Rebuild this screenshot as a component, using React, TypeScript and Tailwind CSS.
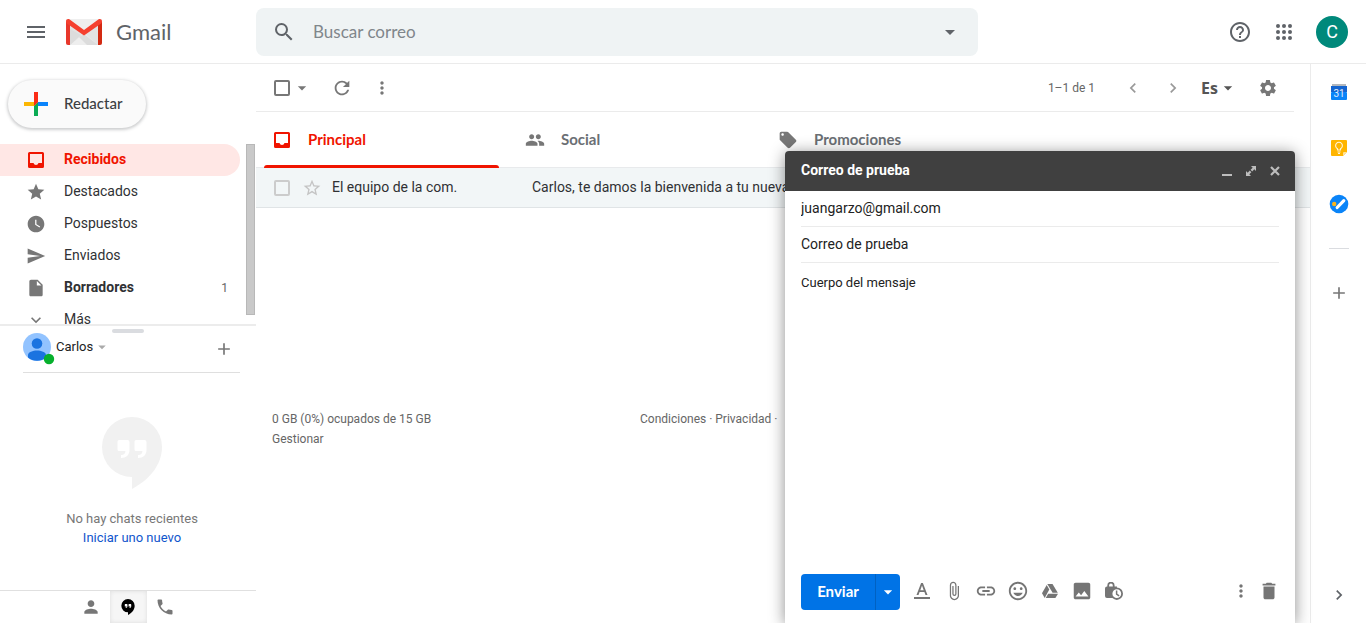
import React from 'react';
import {
  MdAdd,
  MdArrowDropDown,
  MdAttachFile,
  MdChevronLeft,
  MdChevronRight,
  MdDelete,
  MdExpandMore,
  MdHelpOutline,
  MdImage,
  MdInsertDriveFile,
  MdInsertLink,
  MdLocalOffer,
  MdMenu,
  MdMood,
  MdMoreVert,
  MdPeople,
  MdPerson,
  MdPhone,
  MdRefresh,
  MdSearch,
  MdSend,
  MdSettings,
  MdStar,
  MdStarBorder,
  MdWatchLater,
} from 'react-icons/md';

const brand = "font-['Lato','Open_Sans',sans-serif]";

type IconButtonProps = {
  label: string;
  className?: string;
  children: React.ReactNode;
};

function IconButton({ label, className = 'size-8', children }: IconButtonProps) {
  return (
    <button
      type="button"
      aria-label={label}
      className={`flex shrink-0 items-center justify-center ${className}`}
    >
      {children}
    </button>
  );
}

function InboxIcon() {
  return (
    <svg viewBox="0 0 16 16" className="size-4" fill="currentColor" aria-hidden="true">
      <path
        fillRule="evenodd"
        d="M1.5 0h13A1.5 1.5 0 0 1 16 1.500v13a1.500 1.500 0 0 1-1.500 1.500h-13A1.500 1.500 0 0 1 0 14.500v-13A1.500 1.500 0 0 1 1.500 0ZM2 2v9h3.500a2.600 2.600 0 0 0 5 0H14V2Z"
      />
    </svg>
  );
}

function GmailLogo() {
  return (
    <svg viewBox="0 0 36 26" className="h-[26px] w-9" aria-hidden="true">
      <rect width="36" height="26" rx="2" fill="#e3e3e3" />
      <path d="M4 26 18 14l14 12Z" fill="#eeeeee" />
      <path d="M4 10v16l11-10ZM13 18l5-3 14 11H21Z" fill="#dcdcdc" />
      <path d="M2 0h32L18 12Z" fill="#efefef" />
      <path d="M0 2.500V24a2 2 0 0 0 2 2h2V5Z" fill="#e8372b" />
      <path d="M36 2.500V24a2 2 0 0 1-2 2h-2V5Z" fill="#d32a12" />
      <path
        d="M0 2.500C0 .3 2.200-.5 3.700.6L18 11 32.300.6C33.800-.5 36 .3 36 2.500c0 1-.4 1.700-1.200 2.300L18 16.500 1.200 4.800C.4 4.200 0 3.500 0 2.500Z"
        fill="#f5402f"
      />
    </svg>
  );
}

function ComposePlus() {
  return (
    <svg viewBox="0 0 24 24" className="size-6" aria-hidden="true">
      <path d="M10 0h4v10l-4 4Z" fill="#fb2c16" />
      <path d="M0 10h10v4H0Z" fill="#fbb603" />
      <path d="M10 14l4-4v14h-4Z" fill="#0bab54" />
      <path d="M14 10h10v4H14Z" fill="#0a83fb" />
      <path d="M10 10h4l-4 4Z" fill="#fb2c16" />
    </svg>
  );
}

function AppsIcon() {
  return (
    <svg viewBox="0 0 16 16" className="size-4" fill="#5f6368" aria-hidden="true">
      {[2, 8, 14].map((y) => [2, 8, 14].map((x) => <circle key={`${x}-${y}`} cx={x} cy={y} r="2" />))}
    </svg>
  );
}

function CalendarIcon() {
  return (
    <svg viewBox="0 0 16 16" className="size-4" aria-hidden="true">
      <rect x="1" width="14" height="3" fill="#b4b8bd" />
      <rect y="2" width="16" height="6" fill="#1565d0" />
      <rect y="8" width="16" height="8" rx="1" fill="#0a84f8" />
      <text x="8" y="13" textAnchor="middle" fontSize="10" fill="#e4effc" fontFamily="Roboto, sans-serif">
        31
      </text>
    </svg>
  );
}

function KeepIcon() {
  return (
    <svg viewBox="0 0 16 16" className="size-4" aria-hidden="true">
      <path d="M1 0h14a1 1 0 0 1 1 1v11l-4 4H1a1 1 0 0 1-1-1V1a1 1 0 0 1 1-1Z" fill="#ffb500" />
      <path d="M12 16v-3a1 1 0 0 1 1-1h3Z" fill="#ffe29a" />
      <path
        d="M6.500 10V8.700a3.400 3.400 0 1 1 3 0V10Zm0 2h3m-2.500 1.500h2"
        fill="none"
        stroke="#fff6dc"
        strokeWidth="1.100"
      />
    </svg>
  );
}

function TasksIcon() {
  return (
    <svg viewBox="0 0 20 20" className="size-5" aria-hidden="true">
      <circle cx="10" cy="10" r="9.300" fill="#0a84f8" />
      <circle cx="5.200" cy="10" r="2.200" fill="#fbb51c" />
      <path d="m8.200 13.500 6.600-6.800" stroke="#fff" strokeWidth="3.200" strokeLinecap="round" />
    </svg>
  );
}

function HangoutsIcon({ className, quote }: { className: string; quote: string }) {
  return (
    <svg viewBox="0 0 60 72" className={className} aria-hidden="true">
      <path d="M30 0a30 30 0 0 1 30 30c0 18-13 33-30 42V60a30 30 0 0 1 0-60Z" fill="currentColor" />
      <path
        d="M17 23h8.500a2 2 0 0 1 2 2v8c0 5-3.500 8-8.500 8v-3c3 0 4.300-1.500 4.500-4H17a1.500 1.500 0 0 1-1.500-1.500v-8A1.500 1.500 0 0 1 17 23ZM34 23h8.500a2 2 0 0 1 2 2v8c0 5-3.500 8-8.500 8v-3c3 0 4.300-1.500 4.500-4H34a1.500 1.500 0 0 1-1.500-1.500v-8A1.500 1.500 0 0 1 34 23Z"
        fill={quote}
      />
    </svg>
  );
}

function UserAvatar() {
  return (
    <svg viewBox="0 0 32 32" className="size-8" aria-hidden="true">
      <circle cx="14" cy="14" r="14" fill="#92c3ff" />
      <circle cx="14" cy="10.500" r="5.300" fill="#1a73e0" />
      <path d="M5 24.500V22c0-3 5-4.500 9-4.500s9 1.500 9 4.500v2.500a14 14 0 0 1-18 0Z" fill="#1a73e0" />
      <circle cx="26" cy="26" r="5.200" fill="#06b02d" />
    </svg>
  );
}

function FormatIcon() {
  return (
    <svg viewBox="0 0 16 16" className="size-4" fill="currentColor" aria-hidden="true">
      <path d="M0 14h16v2H0Z" />
      <path d="M7.100 0h1.800l4.600 12h-2L10.400 9H5.600l-1.100 3h-2Zm-.8 7.200h3.400L8 2.500Z" />
    </svg>
  );
}

function DriveIcon() {
  return (
    <svg viewBox="0 0 16 14" className="h-3.5 w-4" fill="currentColor" aria-hidden="true">
      <path d="M5.300 0h5.200l5.300 8.800h-5.200Z" />
      <path d="M4.700 1 0 9.200 2.700 14l4.600-8.400Z" />
      <path d="M6.200 9.700H16L13.400 14H3.700Z" />
    </svg>
  );
}

function ConfidentialIcon() {
  return (
    <svg viewBox="0 0 18 18" className="size-[18px]" fill="none" aria-hidden="true">
      <path d="M2 4.500h10L11 16H2a2 2 0 0 1-2-2V6.500a2 2 0 0 1 2-2Z" fill="currentColor" />
      <path d="M3.200 5.500V3.400a2.700 2.700 0 0 1 5.500 0v2.100" stroke="currentColor" strokeWidth="1.800" />
      <circle cx="11.800" cy="11.700" r="5.300" fill="#fff" stroke="currentColor" strokeWidth="1.800" />
      <path d="M11.600 8.400v3.700l2.500 1.800" stroke="currentColor" strokeWidth="1.500" />
    </svg>
  );
}

function ExpandIcon() {
  return (
    <svg viewBox="0 0 10 10" className="size-2.5" fill="currentColor" aria-hidden="true">
      <path d="M5 0h5v5L8.300 3.300 6.200 5.400 4.600 3.800l2.100-2.100ZM5 10H0V5l1.700 1.700L3.800 4.600l1.600 1.600-2.100 2.100Z" />
    </svg>
  );
}

function CloseIcon() {
  return (
    <svg viewBox="0 0 10 10" className="size-2.5" aria-hidden="true">
      <path d="m1 1 8 8M9 1 1 9" stroke="currentColor" strokeWidth="2.200" />
    </svg>
  );
}

function Header() {
  return (
    <header className="flex h-16 shrink-0 items-center border-b border-[#ebebeb] pr-[18px]">
      <div className="flex w-64 shrink-0 items-center">
        <IconButton label="Menú principal" className="ml-3 size-12">
          <MdMenu className="size-6 text-[#5f6368]" />
        </IconButton>
        <a href="#inbox" className="ml-1.5 flex items-center gap-3.5">
          <GmailLogo />
          <span className={`text-[22px] leading-8 text-[#5f6368] ${brand}`}>Gmail</span>
        </a>
      </div>
      <form role="search" className="flex h-12 max-w-[722px] flex-1 items-center rounded-lg bg-[#eff3f4]">
        <IconButton label="Buscar" className="ml-2 size-10">
          <MdSearch className="size-6 text-[#5f6368]" />
        </IconButton>
        <input
          type="text"
          aria-label="Buscar correo"
          placeholder="Buscar correo"
          className={`ml-[9px] min-w-0 flex-1 bg-transparent text-[17px] text-gray-700 outline-none placeholder:text-[#80868b] ${brand}`}
        />
        <IconButton label="Opciones de búsqueda" className="mr-2 size-10">
          <MdArrowDropDown className="size-6 text-[#5f6368]" />
        </IconButton>
      </form>
      <div className="ml-auto flex items-center">
        <IconButton label="Ayuda" className="size-11">
          <MdHelpOutline className="size-6 text-[#5f6368]" />
        </IconButton>
        <IconButton label="Aplicaciones" className="size-11">
          <AppsIcon />
        </IconButton>
        <button
          type="button"
          aria-label="Cuenta de Google"
          className="ml-2.5 size-8 rounded-full bg-[#00897b] text-lg leading-8 text-white"
        >
          C
        </button>
      </div>
    </header>
  );
}

const folders = [
  { name: 'Recibidos', icon: <InboxIcon />, active: true, bold: true },
  { name: 'Destacados', icon: <MdStar className="size-5" /> },
  { name: 'Pospuestos', icon: <MdWatchLater className="size-5" /> },
  { name: 'Enviados', icon: <MdSend className="size-5" /> },
  { name: 'Borradores', icon: <MdInsertDriveFile className="size-5" />, bold: true, count: 1 },
  { name: 'Más', icon: <MdExpandMore className="size-5" /> },
];

function ChatPanel() {
  return (
    <section className="relative flex shrink-0 flex-col border-t-2 border-[#ececec] bg-white">
      <div className="absolute top-[3px] left-28 h-1 w-8 rounded bg-[#dadce0]" />
      <div className="mr-4 ml-[23px] flex h-[47px] items-center border-b border-[#dfdfdf]">
        <UserAvatar />
        <button type="button" className="ml-px flex items-center pb-1 text-[13px] leading-5 text-[#222]">
          Carlos
          <MdArrowDropDown className="size-[18px] text-[#aaa]" />
        </button>
        <IconButton label="Nuevo chat" className="ml-auto size-8">
          <MdAdd className="size-5 text-[#777]" />
        </IconButton>
      </div>
      <div className="flex flex-col items-center pt-11 pb-[43px] pl-2 text-[13px] leading-[19px]">
        <HangoutsIcon className="h-[72px] w-[60px] text-[#f1f1f1]" quote="#fff" />
        <p className="mt-5 text-[#777]">No hay chats recientes</p>
        <a href="#chat" className="text-[#15c]">
          Iniciar uno nuevo
        </a>
      </div>
      <div className="flex h-[33px] justify-center border-t border-[#e0e0e0] text-[#777]">
        <IconButton label="Contactos" className="w-[37px]">
          <MdPerson className="size-5" />
        </IconButton>
        <IconButton label="Conversaciones" className="w-[37px] bg-[#f6f6f6] text-black shadow-[inset_0_0_4px_#ddd]">
          <HangoutsIcon className="h-4 w-3.5" quote="#fff" />
        </IconButton>
        <IconButton label="Llamadas" className="w-[37px]">
          <MdPhone className="size-5" />
        </IconButton>
      </div>
    </section>
  );
}

function Sidebar() {
  return (
    <aside className="flex w-64 shrink-0 flex-col">
      <div className="px-2 py-4">
        <button
          type="button"
          className="flex h-12 items-center gap-4 rounded-full bg-[#fafafa] pr-6 pl-4 shadow-[0_1px_3px_1px_rgba(60,64,67,0.25)]"
        >
          <ComposePlus />
          <span className={`pb-0.5 text-[15px] font-medium text-[#3c4043] ${brand}`}>Redactar</span>
        </button>
      </div>
      <div className="flex min-h-0 flex-1 overflow-hidden">
        <nav className="mr-1.5 flex-1">
          {folders.map((f) => (
            <a
              key={f.name}
              href={`#${f.name}`}
              className={`flex h-8 items-center rounded-r-full pr-3 pl-[26px] text-sm ${
                f.active ? 'bg-[#ffe7e5] text-[#f01400]' : 'text-[#777]'
              } ${f.bold ? 'font-bold' : ''}`}
            >
              <span className="flex w-5 shrink-0 justify-center">{f.icon}</span>
              <span className={`ml-[18px] flex-1 pb-0.5 ${f.active ? '' : 'text-[#303134]'}`}>{f.name}</span>
              {f.count && <span className="text-xs font-normal text-[#666]">{f.count}</span>}
            </a>
          ))}
        </nav>
        <div className="mr-px mb-[9px] w-[9px] border border-[#b8b8b8] bg-[#c9c9c9]" />
      </div>
      <ChatPanel />
    </aside>
  );
}

function Toolbar() {
  return (
    <div className="mr-4 flex h-12 shrink-0 items-center border-b border-[#ebebeb] pr-1.5 pl-[18px] text-[#777]">
      <input
        type="checkbox"
        aria-label="Seleccionar todo"
        className="size-4 appearance-none rounded-xs border-2 border-[#777]"
      />
      <IconButton label="Opciones de selección" className="ml-0.5 size-5">
        <MdArrowDropDown className="size-5" />
      </IconButton>
      <IconButton label="Actualizar" className="ml-2.5 size-10">
        <MdRefresh className="size-[22px]" />
      </IconButton>
      <IconButton label="Más acciones" className="size-10">
        <MdMoreVert className="size-5" />
      </IconButton>
      <span className="mr-[18px] ml-auto text-xs text-[#666]">1–1 de 1</span>
      <IconButton label="Más recientes" className="size-10">
        <MdChevronLeft className="size-5 text-[#999]" />
      </IconButton>
      <IconButton label="Más antiguos" className="size-10">
        <MdChevronRight className="size-5 text-[#999]" />
      </IconButton>
      <button
        type="button"
        aria-label="Herramientas de introducción de texto"
        className="ml-2 flex items-center font-['Open_Sans',sans-serif] text-base leading-5 font-bold text-[#555]"
      >
        Es
        <MdArrowDropDown className="size-5" />
      </button>
      <IconButton label="Configuración" className="ml-2.5 size-10">
        <MdSettings className="size-5" />
      </IconButton>
    </div>
  );
}

const tabs = [
  { name: 'Principal', icon: <InboxIcon />, active: true },
  { name: 'Social', icon: <MdPeople className="size-5" /> },
  { name: 'Promociones', icon: <MdLocalOffer className="size-5" /> },
];

function Main() {
  return (
    <main className="flex min-w-0 flex-1 flex-col">
      <Toolbar />
      <div role="tablist" className="flex h-14 shrink-0 shadow-[inset_0_-1px_0_#e8eaec]">
        {tabs.map((t) => (
          <button
            key={t.name}
            type="button"
            role="tab"
            aria-selected={!!t.active}
            className={`flex w-[253px] flex-col px-2 text-[15px] ${
              t.active ? 'text-[#f01400]' : 'text-[#777]'
            }`}
          >
            <span className="flex w-full flex-1 items-center pl-2">
              <span className="flex w-5 shrink-0 justify-center">{t.icon}</span>
              <span className={`ml-4 pb-0.5 font-bold ${brand} ${t.active ? '' : 'text-[#6b6f74]'}`}>
                {t.name}
              </span>
            </span>
            <span className={`-mt-[3px] h-[3px] w-[235px] rounded-t ${t.active ? 'bg-[#f01400]' : ''}`} />
          </button>
        ))}
      </div>
      <div className="flex h-10 shrink-0 items-center border-b border-[#e0e4e6] bg-[#f2f6f7] pl-[18px] text-sm text-[#303134]">
        <input
          type="checkbox"
          aria-label="Seleccionar mensaje"
          className="size-4 shrink-0 appearance-none rounded-xs border-2 border-[#ccc]"
        />
        <IconButton label="Destacar" className="ml-3 size-5">
          <MdStarBorder className="size-5 text-[#c4c4c4]" />
        </IconButton>
        <span className="ml-2.5 w-[200px] shrink-0 pb-0.5">El equipo de la com.</span>
        <span className="truncate pb-0.5">Carlos, te damos la bienvenida a tu nueva</span>
      </div>
      <footer className="mt-[201px] flex px-4 text-xs leading-5 text-[#666]">
        <div className="w-[368px] shrink-0">
          <p>0 GB (0%) ocupados de 15 GB</p>
          <a href="#storage">Gestionar</a>
        </div>
        <p>
          <a href="#terms">Condiciones</a> · <a href="#privacy">Privacidad</a> ·
        </p>
      </footer>
    </main>
  );
}

function SidePanel() {
  return (
    <aside className="flex w-14 shrink-0 flex-col items-center border-l border-[#ebebeb]">
      <IconButton label="Calendar" className="size-14">
        <CalendarIcon />
      </IconButton>
      <IconButton label="Keep" className="size-14">
        <KeepIcon />
      </IconButton>
      <IconButton label="Tasks" className="size-14">
        <TasksIcon />
      </IconButton>
      <hr className="my-4 w-5 border-[#dadce0]" />
      <IconButton label="Obtener complementos" className="size-14">
        <MdAdd className="size-5 text-[#777]" />
      </IconButton>
      <IconButton label="Ocultar panel lateral" className="mt-auto size-14">
        <MdChevronRight className="size-5 text-[#5f6368]" />
      </IconButton>
    </aside>
  );
}

function ComposeWindow() {
  return (
    <section
      aria-label="Correo de prueba"
      className="absolute right-[71px] bottom-0 flex h-[472px] w-[510px] flex-col rounded-t bg-white shadow-[0_2px_16px_rgba(0,0,0,0.45)]"
    >
      <div className="flex h-10 shrink-0 items-center rounded-t bg-[#404040] pr-2 pl-4 text-[#bdbdbd]">
        <h2 className="flex-1 pb-0.5 text-sm font-bold text-white">Correo de prueba</h2>
        <IconButton label="Minimizar" className="size-6">
          <span className="mt-2 h-0.5 w-2.5 bg-[#bdbdbd]" />
        </IconButton>
        <IconButton label="Pantalla completa" className="size-6">
          <ExpandIcon />
        </IconButton>
        <IconButton label="Cerrar" className="size-6">
          <CloseIcon />
        </IconButton>
      </div>
      <div className="flex flex-1 flex-col px-4 text-sm text-[#222]">
        <input
          aria-label="Para"
          defaultValue="juangarzo@gmail.com"
          className="h-9 border-b border-[#ebebeb] pb-0.5 outline-none"
        />
        <input
          aria-label="Asunto"
          defaultValue="Correo de prueba"
          className="h-9 border-b border-[#ebebeb] pb-0.5 outline-none"
        />
        <textarea
          aria-label="Cuerpo del mensaje"
          defaultValue="Cuerpo del mensaje"
          className="flex-1 resize-none pt-2.5 text-[13px] leading-5 outline-none"
        />
      </div>
      <div className="flex h-[62px] shrink-0 items-center px-4 text-[#757575]">
        <div className="mr-1.5 flex h-9 overflow-hidden rounded bg-[#0073e6] text-white">
          <button type="button" className={`w-[75px] border-r border-[#0061c2] pb-0.5 text-[15px] font-bold ${brand}`}>
            Enviar
          </button>
          <IconButton label="Más opciones de envío" className="h-9 w-6">
            <MdArrowDropDown className="size-5" />
          </IconButton>
        </div>
        <div className="flex flex-1 items-center pb-0.5">
          <IconButton label="Opciones de formato">
            <FormatIcon />
          </IconButton>
          <IconButton label="Adjuntar archivos">
            <MdAttachFile className="size-5" />
          </IconButton>
          <IconButton label="Insertar enlace">
            <MdInsertLink className="size-[22px]" />
          </IconButton>
          <IconButton label="Insertar emoji">
            <MdMood className="size-[22px]" />
          </IconButton>
          <IconButton label="Insertar con Drive">
            <DriveIcon />
          </IconButton>
          <IconButton label="Insertar foto">
            <MdImage className="size-[22px]" />
          </IconButton>
          <IconButton label="Modo confidencial">
            <ConfidentialIcon />
          </IconButton>
          <IconButton label="Más opciones" className="ml-auto h-8 w-7">
            <MdMoreVert className="size-5" />
          </IconButton>
          <IconButton label="Descartar borrador" className="-mr-1 h-8 w-7">
            <MdDelete className="size-[22px]" />
          </IconButton>
        </div>
      </div>
    </section>
  );
}

export default function App() {
  return (
    <div className="relative flex h-screen flex-col overflow-hidden bg-white font-['Roboto',sans-serif]">
      <Header />
      <div className="flex min-h-0 flex-1">
        <Sidebar />
        <Main />
        <SidePanel />
      </div>
      <ComposeWindow />
    </div>
  );
}
